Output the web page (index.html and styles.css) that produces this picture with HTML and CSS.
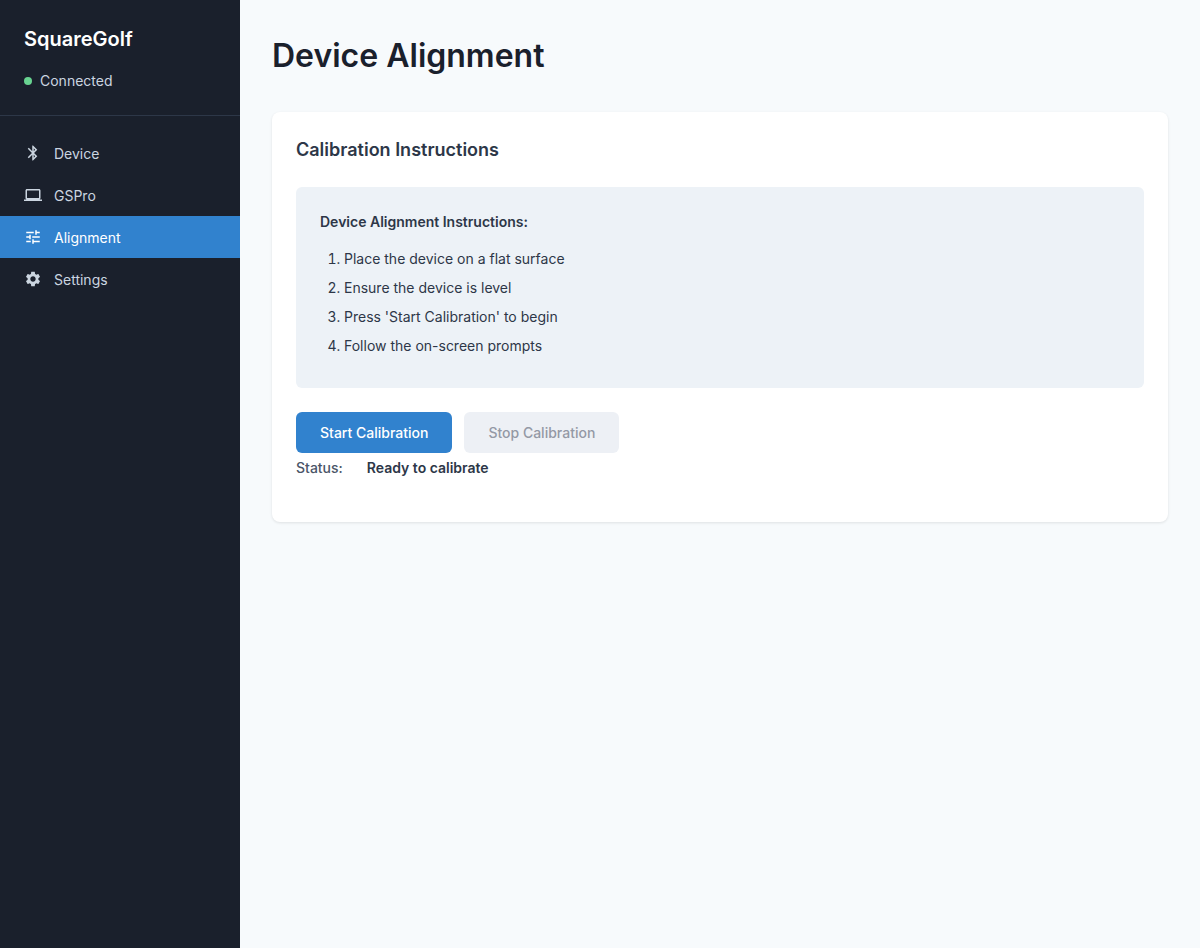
FILE: index.html
```html
<!DOCTYPE html>
<html lang="en">
<head>
<meta charset="utf-8">
<title>SquareGolf</title>
<link rel="stylesheet" href="styles.css">
</head>
<body>
<div class="app">
  <nav class="sidebar">
    <div class="sidebar-header">
      <h2 class="brand">SquareGolf</h2>
      <div class="connection"><span class="dot"></span><span>Connected</span></div>
    </div>
    <ul class="menu">
      <li class="menu-item"><svg class="icon" viewBox="0 0 24 24"><path d="M17.71 7.71L12 2h-1v7.59L6.41 5 5 6.41 10.59 12 5 17.59 6.41 19 11 14.41V22h1l5.71-5.71-4.3-4.29 4.3-4.29zM13 5.83l1.88 1.88L13 9.59V5.83zm1.88 10.46L13 18.17v-3.76l1.88 1.88z"/></svg><span>Device</span></li>
      <li class="menu-item"><svg class="icon" viewBox="0 0 24 24"><path d="M20 18c1.1 0 1.99-.9 1.99-2L22 6c0-1.1-.9-2-2-2H4c-1.1 0-2 .9-2 2v10c0 1.1.9 2 2 2H0v2h24v-2h-4zM4 6h16v10H4V6z"/></svg><span>GSPro</span></li>
      <li class="menu-item active"><svg class="icon" viewBox="0 0 24 24"><path d="M3 17v2h6v-2H3zM3 5v2h10V5H3zm10 16v-2h8v-2h-8v-2h-2v6h2zM7 9v2H3v2h4v2h2V9H7zm14 4v-2H11v2h10zm-6-4h2V7h4V5h-4V3h-2v6z"/></svg><span>Alignment</span></li>
      <li class="menu-item"><svg class="icon" viewBox="0 0 24 24"><path d="M19.14 12.94c.04-.3.06-.61.06-.94 0-.32-.02-.64-.07-.94l2.03-1.58c.18-.14.23-.41.12-.61l-1.92-3.32c-.12-.22-.37-.29-.59-.22l-2.39.96c-.5-.38-1.03-.7-1.62-.94l-.36-2.54c-.04-.24-.24-.41-.48-.41h-3.84c-.24 0-.43.17-.47.41l-.36 2.54c-.59.24-1.13.57-1.62.94l-2.39-.96c-.22-.08-.47 0-.59.22L2.74 8.87c-.12.21-.08.47.12.61l2.03 1.58c-.05.3-.09.63-.09.94s.02.64.07.94l-2.03 1.58c-.18.14-.23.41-.12.61l1.92 3.32c.12.22.37.29.59.22l2.39-.96c.5.38 1.03.7 1.62.94l.36 2.54c.05.24.24.41.48.41h3.84c.24 0 .44-.17.47-.41l.36-2.54c.59-.24 1.13-.56 1.62-.94l2.39.96c.22.08.47 0 .59-.22l1.92-3.32c.12-.22.07-.47-.12-.61l-2.01-1.58zM12 15.6c-1.98 0-3.6-1.62-3.6-3.6s1.62-3.6 3.6-3.6 3.6 1.62 3.6 3.6-1.62 3.6-3.6 3.6z"/></svg><span>Settings</span></li>
    </ul>
  </nav>
  <main class="content">
    <h1 class="page-title">Device Alignment</h1>
    <section class="card">
      <h3 class="card-title">Calibration Instructions</h3>
      <div class="instructions">
        <p class="instructions-title">Device Alignment Instructions:</p>
        <ol class="steps">
          <li>Place the device on a flat surface</li>
          <li>Ensure the device is level</li>
          <li>Press 'Start Calibration' to begin</li>
          <li>Follow the on-screen prompts</li>
        </ol>
      </div>
      <div class="actions">
        <button class="btn primary">Start Calibration</button>
        <button class="btn secondary" disabled>Stop Calibration</button>
      </div>
      <div class="status"><span class="status-label">Status:</span><span class="status-value">Ready to calibrate</span></div>
    </section>
  </main>
</div>
</body>
</html>
```
FILE: styles.css
```css
* { box-sizing: border-box; margin: 0; padding: 0; }
body { font-family: Inter, sans-serif; font-size: 14px; color: #2d3748; background: #f7fafc; }
.app { display: flex; min-height: 100vh; }
.sidebar { width: 240px; flex: none; background: #1a202c; color: #cbd5e0; }
.sidebar-header { height: 116px; padding: 24px; border-bottom: 1px solid #2d3748; }
.brand { font-size: 20px; line-height: 30px; font-weight: 600; color: #fff; margin-bottom: 16px; }
.connection { display: flex; align-items: center; gap: 8px; line-height: 22px; }
.dot { width: 8px; height: 8px; border-radius: 50%; background: #68d391; }
.menu { list-style: none; padding-top: 16px; }
.menu-item { display: flex; align-items: center; gap: 12px; height: 42px; padding: 0 24px; }
.menu-item.active { background: #3182ce; color: #fff; }
.icon { width: 18px; height: 18px; fill: #cbd5e0; }
.active .icon { fill: #fff; }
.content { flex: 1; padding: 32px; }
.page-title { font-size: 32px; line-height: 48px; font-weight: 600; color: #1a202c; margin-bottom: 32px; }
.card { height: 410px; padding: 24px; background: #fff; border-radius: 8px; box-shadow: 0 1px 3px rgba(0,0,0,.1); }
.card-title { font-size: 18px; line-height: 27px; font-weight: 600; margin-bottom: 24px; }
.instructions { height: 201px; padding: 24px; background: #edf2f7; border-radius: 6px; margin-bottom: 24px; }
.instructions-title { font-weight: 600; line-height: 21px; margin-bottom: 16px; }
.steps { padding-left: 24px; }
.steps li { line-height: 21px; margin-bottom: 8px; }
.actions { display: flex; gap: 12px; }
.btn { height: 41px; padding: 0 24px; border: 0; border-radius: 6px; font: 500 14px Inter, sans-serif; }
.primary { background: #3182ce; color: #fff; }
.secondary { background: #edf0f5; color: #9499a5; }
.status { display: flex; gap: 24px; line-height: 21px; padding-top: 4px; }
.status-label { font-weight: 500; color: #4a5568; }
.status-value { font-weight: 600; }
```
